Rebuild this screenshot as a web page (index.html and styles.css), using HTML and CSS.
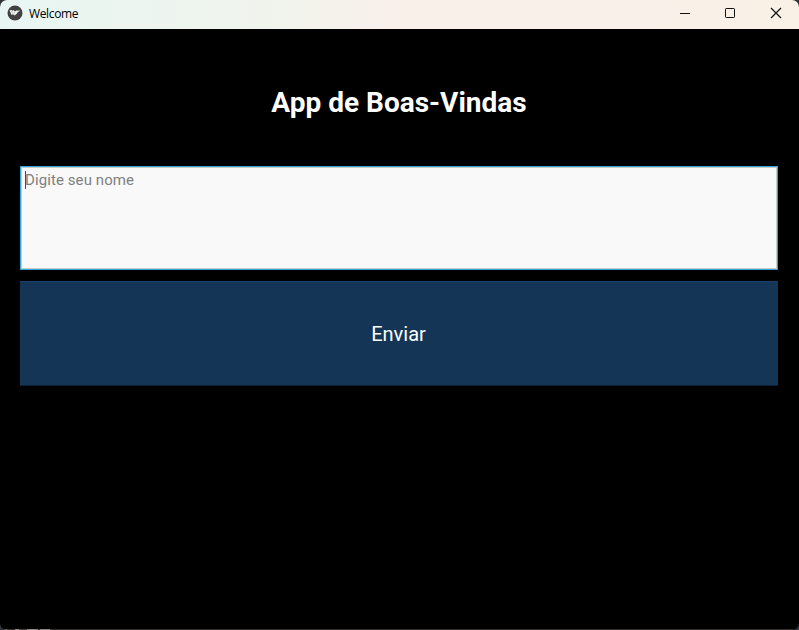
FILE: index.html
```
<!DOCTYPE html>
<html lang="pt-BR">
<head>
<meta charset="utf-8">
<title>Welcome</title>
<link rel="stylesheet" href="styles.css">
</head>
<body>
<div class="window">
  <header class="titlebar">
    <svg class="logo" width="16" height="16" viewBox="0 0 16 16"><circle cx="8" cy="8" r="7.5" fill="#414141"/><path d="M2.5 5.2l1.9-.2 1 .8 1-.8 1.6 1.6 1.2-1 4.3.1-2.6 1.3-1.3 1.9-2.3 1.7-1.2-1.3-1.6.6z" fill="#eef3f1"/><path d="M4.6 6l.8 2.4M7.6 7l-.8 1.6" stroke="#888" stroke-width=".5"/></svg>
    <span class="caption">Welcome</span>
    <div class="controls">
      <svg width="46" height="28" viewBox="0 0 46 28"><path d="M18 13.5h10"/></svg>
      <svg width="45" height="28" viewBox="0 0 45 28"><rect x="17.5" y="8.5" width="9" height="9" rx=".7"/></svg>
      <svg width="46" height="28" viewBox="0 0 46 28"><path d="M18 8l10 10M28 8l-10 10" stroke-width="1.2"/></svg>
    </div>
  </header>
  <main class="content">
    <h1 class="title">App de Boas-Vindas</h1>
    <div class="field"><span class="caret"></span><span class="hint">Digite seu nome</span></div>
    <button class="send">Enviar</button>
  </main>
  <div class="edge"></div>
</div>
</body>
</html>
```
FILE: styles.css
```
* { box-sizing: border-box; }
body { margin: 0; background: #30343a; }
.window {
  height: 630px;
  border-radius: 7px;
  overflow: hidden;
  background: #000;
  display: flex;
  flex-direction: column;
}
.titlebar {
  height: 29px;
  flex: none;
  display: flex;
  align-items: flex-start;
  padding-left: 7px;
  background: linear-gradient(90deg, #e8f6f3 0, #ebf5f0 100px, #f1f3ec 290px, #f9f0ea 390px, #f9f0e9 650px, #f9f1e6 799px);
}
.logo { margin-top: 5px; }
.caption {
  margin: 6px 0 0 6px;
  font: 12px/16px "Open Sans", "Noto Sans", sans-serif;
  letter-spacing: -0.35px;
  color: #000;
}
.controls { display: flex; margin-left: auto; }
.controls svg { fill: none; stroke: #111; stroke-width: 1; }
.content {
  flex: 1;
  display: flex;
  flex-direction: column;
  padding: 21px 21px 0 20px;
  font-family: Roboto, sans-serif;
}
.title {
  margin: 0 0 12px;
  height: 104px;
  font-size: 28px;
  line-height: 105px;
  font-weight: 700;
  text-align: center;
  color: #fff;
}
.field {
  height: 104px;
  margin-bottom: 11px;
  padding: 4px 3px;
  display: flex;
  border: 1px solid #35a5d8;
  box-shadow: inset 0 0 0 1px #c5cbcb;
  background: #f9f9f9;
}
.caret { width: 1px; height: 18px; margin-left: 1px; background: #e00010; }
.hint { margin-left: -1px; font-size: 15px; line-height: 18px; letter-spacing: 0.09px; color: #808080; }
.send {
  height: 105px;
  padding: 1px 1px 0 0;
  border: 1px solid #143556;
  border-top-color: #17406c;
  border-bottom-color: #0b2036;
  border-radius: 1px;
  background: #143556;
  color: #fff;
  font: 20px Roboto, sans-serif;
}
.edge {
  height: 1px;
  flex: none;
  background: linear-gradient(90deg, #77736f 7px, #34302f 7px 15px, #8c8585 15px 19px, #4a4444 19px 27px, #8c8585 27px 38px, #34302f 38px 40px, #8c8585 40px 50px, #34302f 50px);
}
```
